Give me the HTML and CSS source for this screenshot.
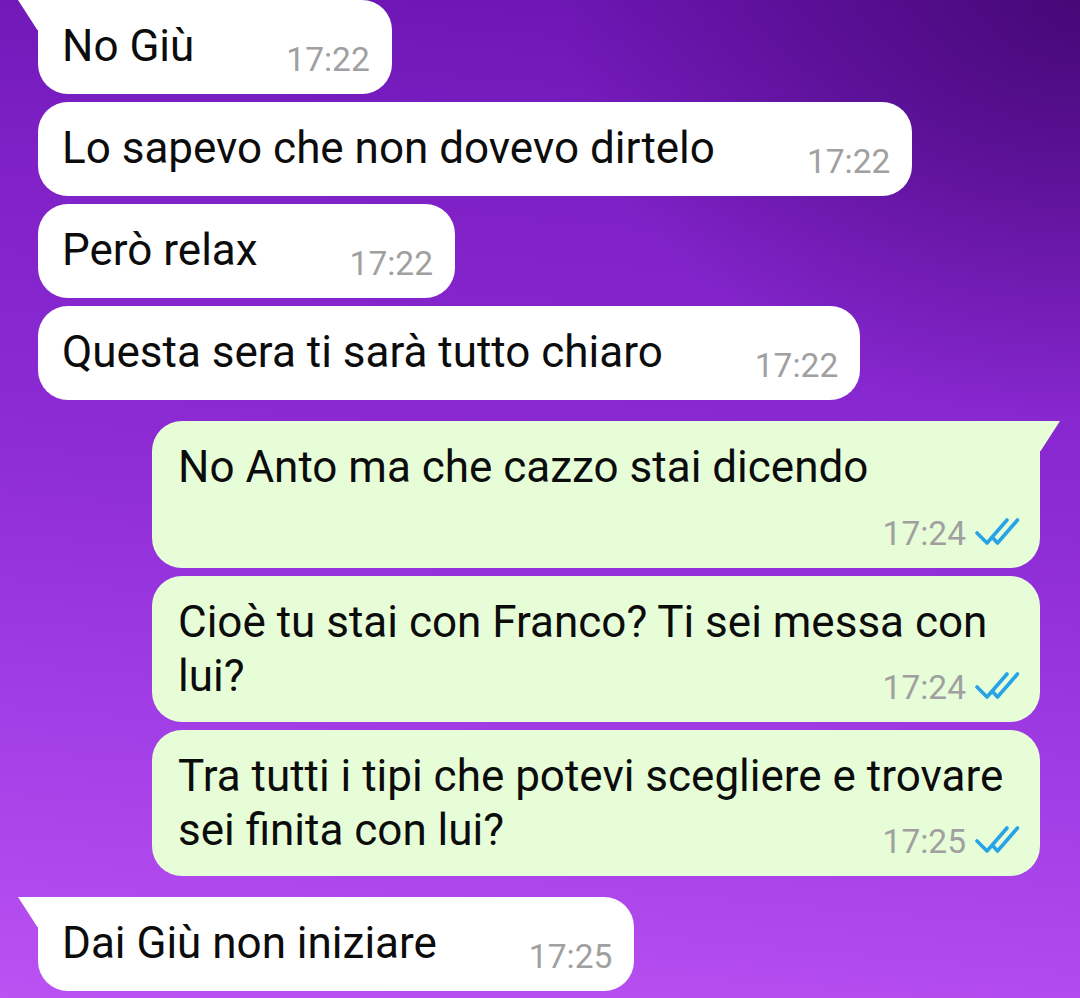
FILE: index.html
```html
<!DOCTYPE html>
<html lang="it">
<head>
<meta charset="utf-8">
<title>Chat</title>
<link rel="stylesheet" href="styles.css">
</head>
<body>
<main class="chat">
  <section class="group group-in">
    <div class="bubble in tail"><span class="text">No Giù</span><span class="time">17:22</span></div>
    <div class="bubble in"><span class="text">Lo sapevo che non dovevo dirtelo</span><span class="time">17:22</span></div>
    <div class="bubble in"><span class="text">Però relax</span><span class="time">17:22</span></div>
    <div class="bubble in"><span class="text">Questa sera ti sarà tutto chiaro</span><span class="time">17:22</span></div>
  </section>
  <section class="group group-out">
    <div class="bubble out tail"><span class="text">No Anto ma che cazzo stai dicendo</span><span class="meta meta-below"><span class="time">17:24</span><svg class="ticks" viewBox="0 0 46 30"><path d="M3 16 L13 26 L33 3 M19 21 L23.5 26 L43.5 3" fill="none" stroke="currentColor" stroke-width="3.6" stroke-linecap="round" stroke-linejoin="round"/></svg></span></div>
    <div class="bubble out"><span class="text">Cioè tu stai con Franco? Ti sei messa con lui?</span><span class="meta"><span class="time">17:24</span><svg class="ticks" viewBox="0 0 46 30"><path d="M3 16 L13 26 L33 3 M19 21 L23.5 26 L43.5 3" fill="none" stroke="currentColor" stroke-width="3.6" stroke-linecap="round" stroke-linejoin="round"/></svg></span></div>
    <div class="bubble out"><span class="text">Tra tutti i tipi che potevi scegliere e trovare sei finita con lui?</span><span class="meta"><span class="time">17:25</span><svg class="ticks" viewBox="0 0 46 30"><path d="M3 16 L13 26 L33 3 M19 21 L23.5 26 L43.5 3" fill="none" stroke="currentColor" stroke-width="3.6" stroke-linecap="round" stroke-linejoin="round"/></svg></span></div>
  </section>
  <section class="group group-in">
    <div class="bubble in tail"><span class="text">Dai Giù non iniziare</span><span class="time">17:25</span></div>
  </section>
</main>
</body>
</html>
```
FILE: styles.css
```css
html, body {
  margin: 0;
  padding: 0;
}
body {
  width: 1080px;
  height: 998px;
  overflow: hidden;
  font-family: Roboto, "Noto Sans", "Liberation Sans", sans-serif;
  background:
    radial-gradient(ellipse 520px 420px at 100% 0%, rgba(58, 4, 100, 0.75), rgba(58, 4, 100, 0) 100%),
    linear-gradient(185deg, #6a14b0 0%, #8022c8 25%, #8e2cd6 50%, #a33fe6 75%, #bb52f2 100%);
}
.chat {
  display: flex;
  flex-direction: column;
  gap: 21px;
}
.group {
  display: flex;
  flex-direction: column;
  gap: 8px;
}
.group-in {
  align-items: flex-start;
  padding-left: 38px;
}
.group-out {
  align-items: flex-end;
  padding-right: 40px;
}
.bubble {
  position: relative;
  box-sizing: border-box;
  font-size: 44px;
  line-height: 54px;
  color: #0c0c0c;
  border-radius: 30px;
}
.bubble.in {
  display: flex;
  align-items: flex-start;
  background: #ffffff;
  height: 94px;
  padding: 19px 22px 0 24px;
}
.bubble.in .time {
  margin-left: 92px;
  margin-top: 21px;
}
.time {
  font-size: 33.5px;
  line-height: 40px;
  color: #a0a0a0;
}
.bubble.out {
  display: flow-root;
  width: 888px;
  background: #e6fdd8;
  padding: 19px 20px 14px 26px;
}
.meta {
  float: right;
  display: flex;
  align-items: center;
  gap: 8px;
  margin-top: 19px;
  height: 40px;
}
.meta-below {
  float: none;
  justify-content: flex-end;
  margin-top: 20px;
}
.ticks {
  width: 46px;
  height: 30px;
  color: #28a4e6;
  margin-top: -4px;
}
.bubble.in.tail {
  border-top-left-radius: 0;
}
.bubble.in.tail::before {
  content: "";
  position: absolute;
  left: -20px;
  top: 0;
  width: 22px;
  height: 30px;
  background: #ffffff;
  clip-path: polygon(0 0, 100% 0, 100% 100%, 88% 100%);
}
.bubble.out.tail {
  border-top-right-radius: 0;
}
.bubble.out.tail::before {
  content: "";
  position: absolute;
  right: -20px;
  top: 0;
  width: 22px;
  height: 30px;
  background: #e6fdd8;
  clip-path: polygon(0 0, 100% 0, 12% 100%, 0 100%);
}
```
